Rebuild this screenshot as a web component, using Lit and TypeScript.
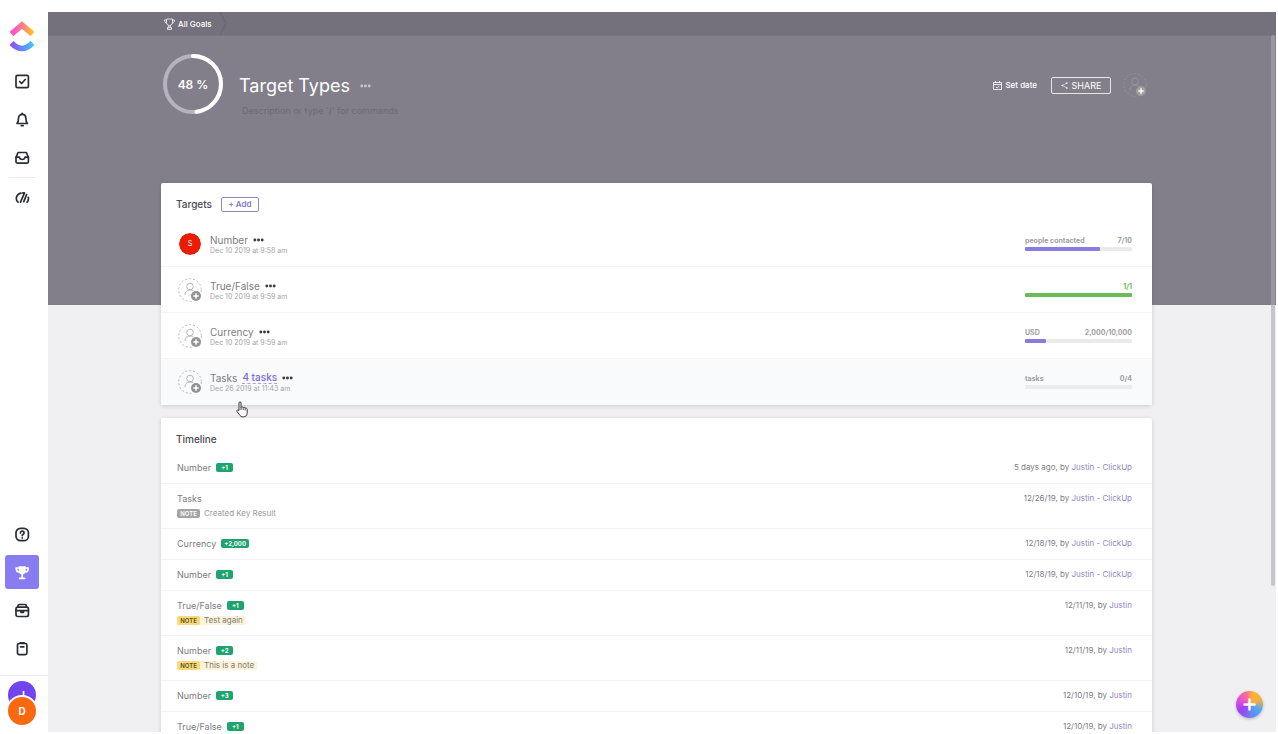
import { LitElement, html, css, svg, nothing } from "lit";
import { customElement } from "lit/decorators.js";

const targets = [
  { name: "Number", date: "Dec 10 2019 at 9:58 am", owner: "S", unit: "people contacted", value: "7/10", pct: 70 },
  { name: "True/False", date: "Dec 10 2019 at 9:59 am", unit: "", value: "1/1", pct: 100, done: true },
  { name: "Currency", date: "Dec 10 2019 at 9:59 am", unit: "USD", value: "2,000/10,000", pct: 20 },
  { name: "Tasks", date: "Dec 26 2019 at 11:43 am", link: "4 tasks", unit: "tasks", value: "0/4", pct: 0, hover: true },
];

const events = [
  { name: "Number", delta: "+1", when: "5 days ago", who: "Justin - ClickUp" },
  { name: "Tasks", when: "12/26/19", who: "Justin - ClickUp", note: "Created Key Result", plain: true },
  { name: "Currency", delta: "+2,000", when: "12/18/19", who: "Justin - ClickUp" },
  { name: "Number", delta: "+1", when: "12/18/19", who: "Justin - ClickUp" },
  { name: "True/False", delta: "+1", when: "12/11/19", who: "Justin", note: "Test again" },
  { name: "Number", delta: "+2", when: "12/11/19", who: "Justin", note: "This is a note" },
  { name: "Number", delta: "+3", when: "12/10/19", who: "Justin" },
  { name: "True/False", delta: "+1", when: "12/10/19", who: "Justin" },
];

const icons = {
  check: svg`<rect x="1" y="1.3" width="12.400" height="12.400" rx="1.5"/><path d="M4.600 7.500l2 2 3.600-4"/>`,
  bell: svg`<path d="M2 11.500c1-1 1.500-2 1.500-5 0-2.500 1.400-4.200 3.700-4.200s3.700 1.700 3.700 4.200c0 3 .5 4 1.500 5z"/><path d="M7.200 1.300v.8M6.200 13.600h2"/>`,
  inbox: svg`<path d="M1 7.500l2-5h8.400l2 5v4.300a1.300 1.300 0 0 1-1.300 1.300H2.300A1.300 1.300 0 0 1 1 11.800z"/><path d="M1 7.200h3.300c.3 1.700 1.400 2.300 2.900 2.300s2.600-.6 2.900-2.300h3.300"/>`,
  gauge: svg`<path d="M3 12.200C-.2 8.800 1.500 4 6 3.100M7.800 2.900h1.700L5.500 12.200M11.600 4.600L8.800 11.600M13.300 7.400c.4 1.900 0 3.500-1.200 4.800"/>`,
  help: svg`<rect x="1" y="1.300" width="12.400" height="12.400" rx="4.500"/><path d="M5.400 6c0-2.500 3.700-2.300 3.700-.1 0 1.300-1.900 1.400-1.900 2.700M7.200 10.800v.2"/>`,
  bag: svg`<rect x="1" y="4.200" width="12.400" height="9.300" rx="1.800"/><path d="M3 4V3a1.500 1.500 0 0 1 1.500-1.500h5.400A1.500 1.500 0 0 1 11.400 3v1M1 7.600h12.400M6 7.800v1.700h2.400V7.800"/>`,
  clip: svg`<rect x="2.500" y="2.500" width="9.400" height="11.200" rx="1.600"/><path d="M5.200 1.900h4M5.500 5.800h3.400"/>`,
};

const icon = (shape: unknown) =>
  html`<svg class="ico" viewBox="0 0 15 15" aria-hidden="true">${shape}</svg>`;

const dots = html`<svg class="dots" viewBox="0 0 12 4" aria-hidden="true"><circle cx="2" cy="2" r="1.600"/><circle cx="6" cy="2" r="1.600"/><circle cx="10" cy="2" r="1.600"/></svg>`;

const assignee = html`<svg class="assignee" viewBox="0 0 24 24" aria-hidden="true">
  <circle class="dash" cx="12" cy="12" r="11.300"/>
  <circle class="line" cx="12" cy="8.500" r="3.300"/>
  <path class="line" d="M7 17c0-3.200 2-5 5-5 1.800 0 3 .5 3.900 1.500"/>
  <circle class="ring" cx="18" cy="18" r="6"/><circle class="disc" cx="18" cy="18" r="5"/>
  <path class="plus" d="M18 15.300v5.400M15.300 18h5.400"/></svg>`;

@customElement("app-root")
export class AppRoot extends LitElement {
  static styles = css`
    :host { display: block; height: 100vh; overflow: hidden; background: #fff; font-family: Inter, "Noto Sans", sans-serif; color: #7c7c80; }
    * { box-sizing: border-box; }
    button { font: inherit; color: inherit; background: none; border: 0; padding: 0; cursor: pointer; }
    a { color: inherit; text-decoration: none; }
    h1, h2, ul { margin: 0; padding: 0; font-weight: 400; list-style: none; }
    svg { display: block; flex: none; }
    .shell { display: flex; height: 100%; padding: 12px 2px 2px 0; position: relative; }
    .side { width: 48px; flex: none; display: flex; flex-direction: column; justify-content: space-between; padding-right: 4px; }
    .group { display: flex; flex-direction: column; align-items: center; }
    .logo { width: 26px; height: 32px; margin: 9px 0 9px; }
    .nav { width: 34px; height: 34px; margin: 2px 0; border-radius: 3px; display: grid; place-items: center; color: #292d34; }
    .nav.on { background: #877df1; color: #fff; }
    .ico { width: 15px; height: 15px; fill: none; stroke: currentColor; stroke-width: 1.700; stroke-linejoin: round; stroke-linecap: round; }
    .rule { width: 26px; height: 1px; margin-top: 1px; background: #e9ebf0; }
    .people { width: 48px; margin: 8px -4px 0 0; padding: 5px 4px 5px 0; border-top: 1px solid #e9ebf0; }
    .person { width: 28px; height: 28px; border-radius: 50%; background: #7045ee; color: #fff; font-size: 10px; font-weight: 700; display: grid; place-items: center; }
    .person.front { width: 32px; height: 32px; margin-top: -14px; border: 2px solid #fff; background: #fa6910; z-index: 1; }
    .main { flex: 1; min-width: 0; overflow: hidden; background: linear-gradient(#827f8b 293px, #f0eff2 293px); }
    .crumbs { height: 24px; background: #74717d; border-bottom: 1px solid #797682; color: #fff; }
    .content { padding-right: 11px; }
    .inner { margin: 0 auto; width: calc(100% - 226px); }
    .crumbs .inner { display: flex; align-items: center; height: 23px; }
    .crumb { display: flex; align-items: center; gap: 3px; font-size: 8px; line-height: 12px; font-weight: 500; padding-left: 3px; }
    .cup { width: 11px; height: 12px; fill: none; stroke: currentColor; }
    .chev { width: 8px; height: 23px; margin-left: 7px; fill: none; stroke: #696672; }
    .head { display: flex; align-items: flex-start; height: 147px; padding-top: 17px; color: #fff; }
    .dial { position: relative; width: 62px; height: 62px; margin-left: 1px; display: grid; place-items: center; font-size: 12px; font-weight: 600; }
    .dial svg { position: absolute; inset: 0; fill: none; stroke-width: 4; stroke-linecap: round; }
    .titles { flex: 1; padding: 22px 0 0 15px; }
    .title { display: flex; align-items: center; gap: 10px; }
    h1 { font-size: 18px; line-height: 22px; }
    .desc { display: block; margin: 6px 0 0 3px; width: 200px; padding: 0; border: 0; outline: 0; background: none; font: 9px/16px Inter, sans-serif; color: #6d6a76; }
    .desc::placeholder { color: #6d6a76; opacity: 1; }
    .tools { display: flex; align-items: center; padding: 20px 5px 0 0; }
    .date { display: flex; align-items: center; gap: 3px; font-size: 8px; line-height: 12px; font-weight: 500; margin-right: 14px; }
    .date svg { width: 9px; height: 9px; fill: none; stroke: currentColor; stroke-width: .8; }
    .share { display: flex; align-items: center; justify-content: center; gap: 4px; width: 60px; height: 17px; border: 1px solid #e6e5ea; border-radius: 2px; font-size: 9px; margin-right: 12px; }
    .share svg { width: 7px; height: 7px; fill: currentColor; stroke: currentColor; stroke-width: .6; }
    .dots { width: 11px; height: 4px; fill: #3c3c42; }
    .head .dots { fill: #c5c3cc; }
    .card { background: #fff; border-radius: 2px; box-shadow: 0 1px 4px rgba(0,0,0,.16); margin-bottom: 13px; }
    .cardhead { display: flex; align-items: center; gap: 9px; height: 38px; padding: 4px 15px 0; }
    .cardhead.tight { height: 35px; padding-top: 6px; }
    h2 { font-size: 10px; line-height: 14px; font-weight: 500; color: #4a4a50; }
    .add { width: 38px; height: 15px; border: 1px solid #8e88bd; border-radius: 2px; color: #8378c9; font-size: 8px; font-weight: 600; line-height: 12px; }
    .target { display: flex; align-items: center; height: 46px; padding: 0 20px 0 17px; border-bottom: 1px solid #f5f5f6; }
    .target.hover { background: #f9fafc; border-bottom-color: #f9fafc; }
    .owner { width: 24px; height: 24px; border: 1px solid #fff; border-radius: 50%; background: #ea1c04; background-clip: padding-box; color: #fff; font-size: 7px; display: grid; place-items: center; }
    .assignee { width: 24px; height: 24px; fill: none; stroke: #a6a6a9; }
    .assignee .dash { stroke-dasharray: 2 2; stroke-width: .8; }
    .assignee .line { stroke-width: .8; }
    .assignee .ring { fill: #fff; stroke: none; }
    .assignee .disc { fill: #929292; stroke: none; }
    .assignee .plus { stroke: #fff; stroke-width: 1.500; }
    .head .assignee { stroke: #9a97a2; }
    .head .assignee .ring { fill: none; }
    .head .assignee .disc { fill: #a09f9f; }
    .info { flex: 1; padding: 2px 0 0 8px; }
    .line1 { display: flex; align-items: center; gap: 5px; font-size: 10px; line-height: 12px; height: 12px; }
    .link { color: #7b68d8; font-weight: 500; border-bottom: 1px dashed #a99ee4; line-height: 11px; }
    .sub { font-size: 7px; line-height: 9px; color: #a5a5a8; }
    .meter { width: 107px; font-size: 7px; line-height: 9px; font-weight: 700; color: #a0a0a3; }
    .meter .nums { display: flex; justify-content: space-between; min-height: 9px; }
    .bar { height: 4px; margin-top: 2px; border-radius: 1px; background: #ebebec; }
    .fill { height: 4px; border-radius: 1px; background: #887ddf; }
    .done { color: #6dbb5c; }
    .done .fill { background: #6dba59; }
    .event { display: flex; justify-content: space-between; padding: 7px 20px 8px 16px; border-bottom: 1px solid #f2f2f3; font-size: 9px; line-height: 15px; }
    .name { display: flex; align-items: center; gap: 5px; }
    .delta { min-width: 17px; height: 9px; padding: 0 3px; border-radius: 2px; background: #1fa36f; color: #fff; font-size: 6px; font-weight: 700; line-height: 9px; text-align: center; }
    .note { display: inline-flex; align-items: center; height: 9px; margin: 3px 0 2px; border-radius: 2px; background: #fdf3d7; font-size: 8px; line-height: 9px; vertical-align: top; padding-right: 3px; }
    .notes { height: 14px; line-height: 9px; }
    .tag { height: 9px; width: 23px; margin-right: 4px; border-radius: 2px; background: #f8db78; color: #594e29; font-size: 6px; font-weight: 600; text-align: center; }
    .note.plain { background: none; color: #99999c; }
    .note.plain .tag { background: #a4a4a4; color: #fff; }
    .meta { font-size: 8px; }
    .meta a { color: #9388be; }
    .thumb { position: absolute; right: 3px; top: 35px; width: 4px; height: 75%; border-radius: 2px; background: rgba(170,168,178,.6); }
    .fab { position: absolute; right: 15px; bottom: 16px; width: 27px; height: 27px; border-radius: 50%; display: grid; place-items: center; background: conic-gradient(from 20deg, #fdb52c, #f6ad45 45deg, #4ba9f7 100deg, #6a84f5 150deg, #a43cf5 220deg, #e553d5 280deg, #fc6a9e 320deg, #fdb52c); box-shadow: 0 1px 3px rgba(0,0,0,.25); }
    .cursor { position: absolute; left: 236px; top: 401px; width: 13px; height: 17px; }
  `;

  render() {
    return html`<div class="shell">
      <nav class="side">
        <div class="group">
          <svg class="logo" viewBox="0 0 26 32" role="img" aria-label="Home">
            <defs>
              <linearGradient id="a"><stop stop-color="#fb4fd4"/><stop offset=".55" stop-color="#fc7f82"/><stop offset="1" stop-color="#ffc11d"/></linearGradient>
              <linearGradient id="b"><stop stop-color="#8b50fa"/><stop offset="1" stop-color="#43c4fd"/></linearGradient>
            </defs>
            <path d="M2.500 13L13 4l10.500 9" fill="none" stroke="url(#a)" stroke-width="5.600"/>
            <path d="M2.500 22Q13 33 23.500 22" fill="none" stroke="url(#b)" stroke-width="5.600"/>
          </svg>
          <button class="nav" aria-label="Tasks">${icon(icons.check)}</button>
          <button class="nav" aria-label="Notifications">${icon(icons.bell)}</button>
          <button class="nav" aria-label="Inbox">${icon(icons.inbox)}</button>
          <div class="rule"></div>
          <button class="nav" aria-label="Dashboards">${icon(icons.gauge)}</button>
        </div>
        <div class="group">
          <button class="nav" aria-label="Help">${icon(icons.help)}</button>
          <button class="nav on" aria-label="Goals"><svg class="ico" viewBox="0 0 15 15"><path fill="currentColor" stroke="none" d="M3.700 1.200h7v4.800c0 2-1.500 3.500-3.500 3.500S3.700 8 3.700 6z"/><path d="M3.700 3H1.200c0 2.500 1 4 3 4M10.700 3h2.500c0 2.500-1 4-3 4M7.200 9v4M4.700 13.300h5"/></svg></button>
          <button class="nav" aria-label="Portfolio">${icon(icons.bag)}</button>
          <button class="nav" aria-label="Notepad">${icon(icons.clip)}</button>
          <div class="group people"><div class="person">J</div><div class="person front">D</div></div>
        </div>
      </nav>
      <main class="main">
        <div class="crumbs"><div class="content"><div class="inner">
          <a class="crumb" href="#"><svg class="cup" viewBox="0 0 11 12"><path d="M2.500 1h6v3.500c0 1.700-1.200 3-3 3s-3-1.300-3-3zM2.500 2H.6c0 2 .8 3 2.200 3.200M8.500 2h1.900c0 2-.8 3-2.200 3.200M4.700 7.500v2M6.300 7.500v2M3.500 11.400V9.600h4v1.800z" stroke-width=".8"/></svg>All Goals</a>
          <svg class="chev" viewBox="0 0 8 23"><path d="M1 0l6 11.500L1 23"/></svg>
        </div></div></div>
        <div class="content"><div class="inner">
          <header class="head">
            <div class="dial">
              <svg viewBox="0 0 62 62"><circle cx="31" cy="31" r="28" stroke="#b6b3bf"/><circle cx="31" cy="31" r="28" stroke="#fff" pathLength="100" stroke-dasharray="48 52" transform="rotate(-90 31 31)"/></svg>48 %
            </div>
            <div class="titles">
              <div class="title"><h1>Target Types</h1><button aria-label="Goal options">${dots}</button></div>
              <input class="desc" aria-label="Description" placeholder="Description or type '/' for commands" />
            </div>
            <div class="tools">
              <button class="date"><svg viewBox="0 0 9 9"><path d="M.5 1.500h8v7h-8zM.5 3.500h8M2.500 0v2M6.500 0v2M3 6l1.200 1 2-2"/></svg>Set date</button>
              <button class="share"><svg viewBox="0 0 8 8"><path d="M7 1L1.500 4 7 7" fill="none"/><circle cx="1.500" cy="4" r=".6"/><circle cx="6.700" cy="1.200" r=".6"/><circle cx="6.700" cy="6.800" r=".6"/></svg>SHARE</button>
              <button aria-label="Add owner">${assignee}</button>
            </div>
          </header>
          <section class="card">
            <div class="cardhead"><h2>Targets</h2><button class="add">+ Add</button></div>
            <ul>${targets.map((t) => html`<li class="target ${t.hover ? "hover" : ""}">
              ${t.owner ? html`<div class="owner">${t.owner}</div>` : html`<button aria-label="Assign">${assignee}</button>`}
              <div class="info">
                <div class="line1"><span>${t.name}</span>${t.link ? html`<a class="link" href="#">${t.link}</a>` : nothing}<button aria-label="Target options">${dots}</button></div>
                <div class="sub">${t.date}</div>
              </div>
              <div class="meter ${t.done ? "done" : ""}">
                <div class="nums"><span>${t.unit}</span><span>${t.value}</span></div>
                <div class="bar"><div class="fill" style="width:${t.pct}%"></div></div>
              </div></li>`)}</ul>
          </section>
          <section class="card">
            <div class="cardhead tight"><h2>Timeline</h2></div>
            <ul>${events.map((e) => html`<li class="event">
              <div><div class="name">${e.name}${e.delta ? html`<span class="delta">${e.delta}</span>` : nothing}</div>
              ${e.note ? html`<div class="notes"><div class="note ${e.plain ? "plain" : ""}"><span class="tag">NOTE</span>${e.note}</div></div>` : nothing}</div>
              <div class="meta">${e.when}, by <a href="#">${e.who}</a></div></li>`)}</ul>
          </section>
        </div></div>
      </main>
      <div class="thumb"></div>
      <button class="fab" aria-label="Create"><svg width="13" height="13" viewBox="0 0 13 13"><path d="M6.500 1.500v10M1.500 6.500h10" stroke="#fff" stroke-width="2.400" stroke-linecap="round"/></svg></button>
      <svg class="cursor" viewBox="0 0 13 17" aria-hidden="true"><path d="M3 9.500V2c0-1.500 2-1.500 2 0v4.500c.5-1 2-.8 2.200.2.600-.7 1.900-.4 2 .5.900-.4 2 .1 2 1.200v3.500c0 2.500-1.500 4-4 4-2 0-2.900-.8-3.800-2.300L1 10.500c-.7-1.300.8-2 1.500-1.200z" fill="#fff" stroke="#222" stroke-width=".9"/><path d="M5 6.500v2.500M7.200 7v2M9.200 7.500v2" stroke="#222" stroke-width=".8"/></svg>
    </div>`;
  }
}
